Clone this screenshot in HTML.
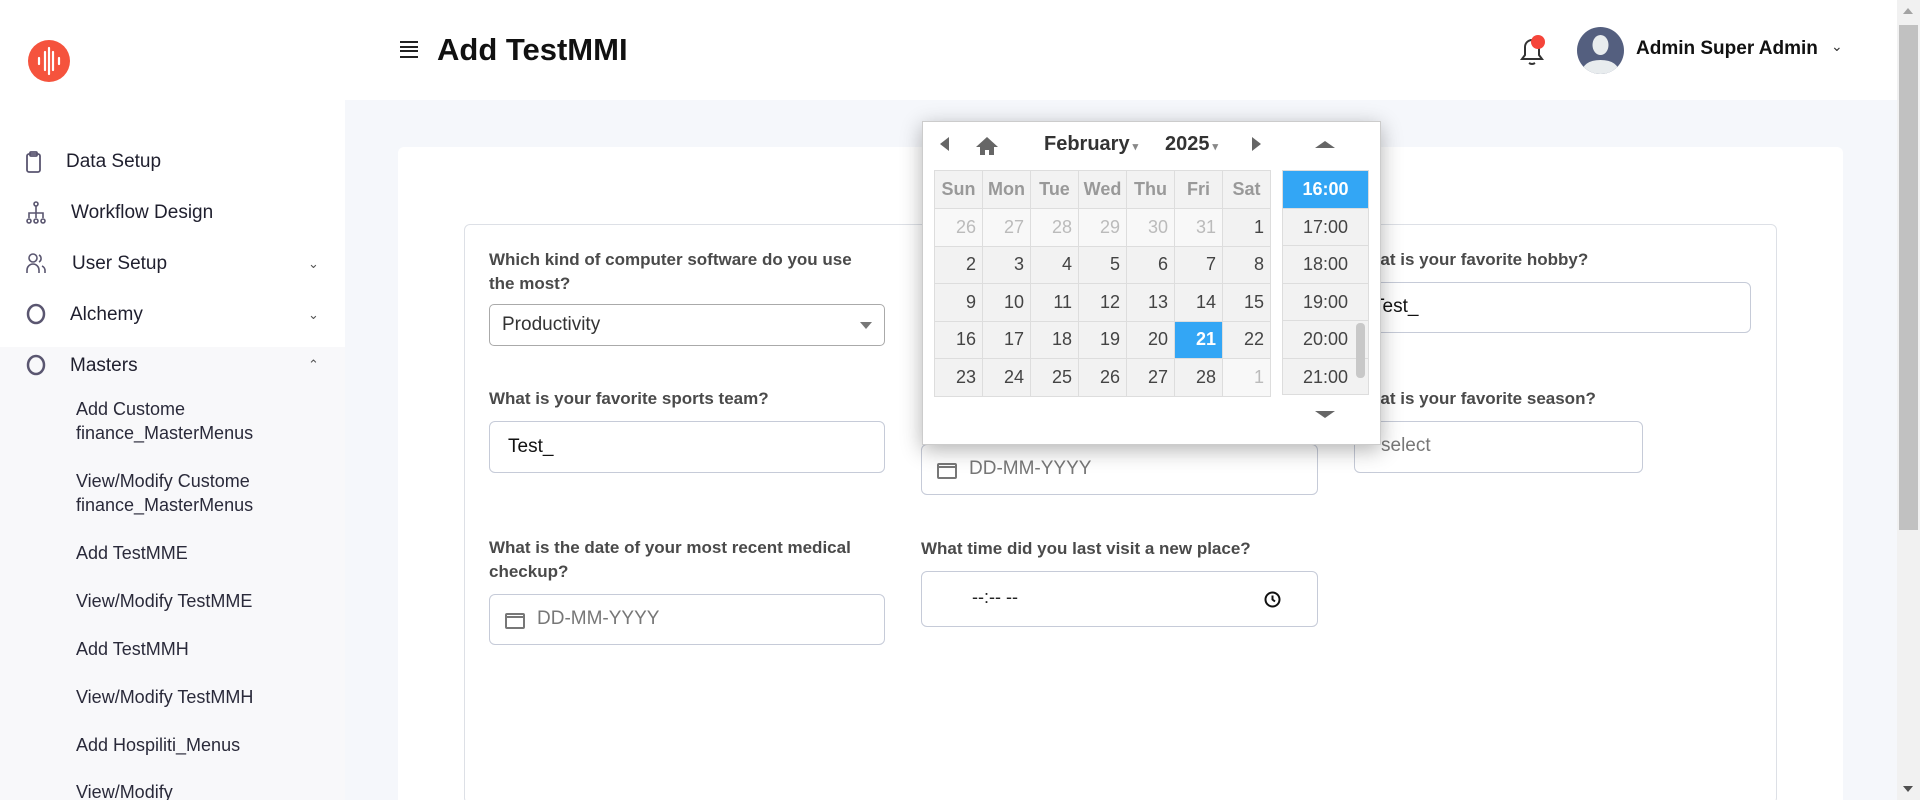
<!DOCTYPE html>
<html style="overflow:hidden;width:1920px;height:800px"><head><meta charset="utf-8"><style>
*{box-sizing:border-box;margin:0;padding:0}
body{width:1920px;height:800px;overflow:hidden;font-family:"Liberation Sans",sans-serif;background:#fff;position:relative;color:#222}
.a{position:absolute}
.side{left:0;top:0;width:345px;height:800px;background:#fff}
.mi{position:absolute;left:66px;font-size:19px;color:#1f1f2e}
.sub{position:absolute;left:76px;font-size:18px;color:#2a2a3a;line-height:24px}
.lbl{position:absolute;font-size:17px;font-weight:bold;color:#4a4a4a;line-height:24px}
.inp{position:absolute;border:1px solid #c6cbd8;border-radius:6px;background:#fff;font-size:19px}
.cal{border-collapse:collapse;position:absolute;left:934px;top:170px}
.cal td{width:48px;height:37.5px;border:1px solid #ddd;background:#f2f2f2;text-align:right;padding-right:6px;font-size:18px;color:#444}
.cal tr.h td{height:38px;text-align:center;padding:0;font-weight:bold;color:#999}
.cal td.o{color:#bbb;background:#f8f8f8}
.cal td.s{background:#33a6f5;color:#fff;font-weight:bold}
.tl div{height:37.5px;border-bottom:1px solid #ddd;background:#f2f2f2;text-align:center;line-height:37px;font-size:18px;color:#444}
</style></head><body>
<div class="a side">
  <svg class="a" style="left:28px;top:40px" width="42" height="42"><circle cx="21" cy="21" r="21" fill="#f5533d"/><g stroke="#fff" stroke-width="2.2" stroke-linecap="round"><line x1="11" y1="18" x2="11" y2="24"/><line x1="17" y1="12" x2="17" y2="30"/><line x1="21" y1="8" x2="21" y2="34"/><line x1="25" y1="12" x2="25" y2="30"/><line x1="31" y1="18" x2="31" y2="24"/></g></svg>
  <svg class="a" style="left:26px;top:151px" width="16" height="22" fill="none" stroke="#5a5670" stroke-width="1.8"><rect x="1" y="3" width="13" height="18" rx="2"/><rect x="4" y="1" width="7" height="4" rx="1"/></svg>
  <div class="mi" style="top:151px">Data Setup</div>
  <svg class="a" style="left:26px;top:201px" width="20" height="24" fill="none" stroke="#5a5670" stroke-width="1.6"><circle cx="10" cy="3" r="2"/><line x1="10" y1="5" x2="10" y2="17"/><path d="M3 17V12h14v5"/><circle cx="3" cy="20" r="2"/><circle cx="10" cy="20" r="2"/><circle cx="17" cy="20" r="2"/></svg>
  <div class="mi" style="top:202px;left:71px">Workflow Design</div>
  <svg class="a" style="left:26px;top:252px" width="20" height="22" fill="none" stroke="#5a5670" stroke-width="1.6"><circle cx="7" cy="6" r="4"/><path d="M1 21v-3a6 6 0 0112 0v3"/><path d="M13 3a4 4 0 010 7M16 14a5 5 0 013 5v2"/></svg>
  <div class="mi" style="top:253px;left:72px">User Setup</div>
  <div class="a" style="left:308px;top:256px;font-size:13px;color:#555">&#8964;</div>
  <svg class="a" style="left:26px;top:303px" width="20" height="22"><ellipse cx="10" cy="11" rx="8" ry="9" fill="none" stroke="#5a5670" stroke-width="2.5"/></svg>
  <div class="mi" style="top:304px;left:70px">Alchemy</div>
  <div class="a" style="left:308px;top:307px;font-size:13px;color:#555">&#8964;</div>
  <div class="a" style="left:0;top:347px;width:345px;height:453px;background:#f8f8fa"></div>
  <svg class="a" style="left:26px;top:354px" width="20" height="22"><ellipse cx="10" cy="11" rx="8" ry="9" fill="none" stroke="#5a5670" stroke-width="2.5"/></svg>
  <div class="mi" style="top:355px;left:70px">Masters</div>
  <div class="a" style="left:308px;top:357px;font-size:13px;color:#555">&#8963;</div>
  <div class="sub" style="top:397px">Add Custome<br>finance_MasterMenus</div>
  <div class="sub" style="top:469px">View/Modify Custome<br>finance_MasterMenus</div>
  <div class="sub" style="top:541px">Add TestMME</div>
  <div class="sub" style="top:589px">View/Modify TestMME</div>
  <div class="sub" style="top:637px">Add TestMMH</div>
  <div class="sub" style="top:685px">View/Modify TestMMH</div>
  <div class="sub" style="top:733px">Add Hospiliti_Menus</div>
  <div class="sub" style="top:780px">View/Modify</div>
</div>
<div class="a" style="left:345px;top:100px;width:1552px;height:700px;background:#f5f7fb"></div>
<div class="a" style="left:400px;top:41px;width:18px;height:17px;border-top:2px solid #222;border-bottom:2px solid #222"><div style="margin-top:3px;border-top:2px solid #222;border-bottom:2px solid #222;height:6px"></div></div>
<div class="a" style="left:437px;top:32px;font-size:31px;font-weight:bold;color:#111">Add TestMMI</div>
<svg class="a" style="left:1518px;top:32px" width="32" height="36" fill="none" stroke="#333" stroke-width="2"><path d="M4 27h20l-3-4v-8a7 7 0 00-14 0v8z"/><path d="M11 31q3 2 6 0"/><circle cx="20" cy="10" r="7" fill="#f5453a" stroke="none"/></svg>
<svg class="a" style="left:1577px;top:27px" width="47" height="47"><circle cx="23.5" cy="23.5" r="23.5" fill="#545f7f"/><clipPath id="c"><circle cx="23.5" cy="23.5" r="23.5"/></clipPath><g clip-path="url(#c)" fill="#e8ecee"><ellipse cx="23.5" cy="18" rx="8" ry="10"/><path d="M4 47q2-14 19.5-14T43 47z"/></g></svg>
<div class="a" style="left:1636px;top:38px;font-size:19px;font-weight:bold;color:#111">Admin Super Admin</div>
<div class="a" style="left:1831px;top:38px;font-size:14px;color:#333">&#8964;</div>
<div class="a" style="left:1897px;top:0;width:23px;height:800px;background:#f1f1f1"><div style="position:absolute;left:2px;top:25px;width:19px;height:505px;background:#c1c1c1"></div>
<div style="position:absolute;left:6px;top:8px;border:5px solid transparent;border-bottom:6px solid #a3a3a3;border-top:0"></div>
<div style="position:absolute;left:6px;bottom:8px;border:5px solid transparent;border-top:6px solid #505050;border-bottom:0"></div></div>

<div class="a" style="left:398px;top:147px;width:1445px;height:653px;background:#fff;border-radius:6px 6px 0 0"></div>
<div class="a" style="left:464px;top:224px;width:1313px;height:580px;border:1px solid #dde0e6;border-radius:6px"></div>

<div class="lbl" style="left:489px;top:248px;width:420px">Which kind of computer software do you use<br>the most?</div>
<div class="inp" style="left:489px;top:304px;width:396px;height:42px;border-color:#aaa;border-radius:5px"><span style="position:absolute;left:12px;top:9px;color:#333">Productivity</span><span style="position:absolute;right:12px;top:17px;border:6px solid transparent;border-top:7px solid #777;border-bottom:0"></span></div>
<div class="lbl" style="left:489px;top:387px">What is your favorite sports team?</div>
<div class="inp" style="left:489px;top:421px;width:396px;height:52px"><span style="position:absolute;left:18px;top:14px;color:#111">Test_</span></div>
<div class="lbl" style="left:489px;top:536px;width:420px">What is the date of your most recent medical checkup?</div>
<div class="inp" style="left:489px;top:594px;width:396px;height:51px"><svg style="position:absolute;left:15px;top:17px" width="20" height="17" fill="none" stroke="#777" stroke-width="2"><rect x="1" y="2" width="18" height="14" rx="1"/><line x1="1" y1="5" x2="19" y2="5"/></svg><span style="position:absolute;left:47px;top:13px;color:#777">DD-MM-YYYY</span></div>

<div class="inp" style="left:921px;top:444px;width:397px;height:51px"><svg style="position:absolute;left:15px;top:17px" width="20" height="17" fill="none" stroke="#777" stroke-width="2"><rect x="1" y="2" width="18" height="14" rx="1"/><line x1="1" y1="5" x2="19" y2="5"/></svg><span style="position:absolute;left:47px;top:13px;color:#777">DD-MM-YYYY</span></div>
<div class="lbl" style="left:921px;top:537px">What time did you last visit a new place?</div>
<div class="inp" style="left:921px;top:571px;width:397px;height:56px"><span style="position:absolute;left:50px;top:15px;color:#222;font-size:18px">--:-- --</span><svg style="position:absolute;left:342px;top:19px" width="17" height="17" fill="none" stroke="#111" stroke-width="2"><circle cx="8.5" cy="8.5" r="7"/><path d="M8.5 4.5v4l2.5 2"/></svg></div>

<div class="lbl" style="left:1354px;top:248px">What is your favorite hobby?</div>
<div class="inp" style="left:1354px;top:282px;width:397px;height:51px"><span style="position:absolute;left:18px;top:13px;color:#111">Test_</span></div>
<div class="lbl" style="left:1354px;top:387px">What is your favorite season?</div>
<div class="inp" style="left:1354px;top:421px;width:289px;height:52px"><span style="position:absolute;left:26px;top:13px;color:#777">select</span></div>

<div class="a" style="left:922px;top:121px;width:459px;height:324px;background:#fff;border:1px solid #ccc;box-shadow:0 5px 20px rgba(0,0,0,.3)"></div>
<div class="a" style="left:940px;top:137px;border:7px solid transparent;border-right:9px solid #666;border-left:0;height:0"></div>
<svg class="a" style="left:975px;top:136px" width="24" height="20"><path d="M12 1L1 11h4v8h5v-5h4v5h5v-8h4z" fill="#666"/></svg>
<div class="a" style="left:1044px;top:133px;font-size:20px;font-weight:bold;color:#333">February<span style="font-size:11px;color:#888"> &#9662;</span></div>
<div class="a" style="left:1165px;top:133px;font-size:20px;font-weight:bold;color:#333">2025<span style="font-size:11px;color:#888"> &#9662;</span></div>
<div class="a" style="left:1252px;top:137px;border:7px solid transparent;border-left:9px solid #666;border-right:0;height:0"></div>
<div class="a" style="left:1315px;top:141px;border:10px solid transparent;border-bottom:7px solid #666;border-top:0"></div>
<div class="a" style="left:1315px;top:411px;border:10px solid transparent;border-top:7px solid #666;border-bottom:0"></div>
<table class="cal">
<tr class="h"><td>Sun</td><td>Mon</td><td>Tue</td><td>Wed</td><td>Thu</td><td>Fri</td><td>Sat</td></tr>
<tr><td class="o">26</td><td class="o">27</td><td class="o">28</td><td class="o">29</td><td class="o">30</td><td class="o">31</td><td>1</td></tr>
<tr><td>2</td><td>3</td><td>4</td><td>5</td><td>6</td><td>7</td><td>8</td></tr>
<tr><td>9</td><td>10</td><td>11</td><td>12</td><td>13</td><td>14</td><td>15</td></tr>
<tr><td>16</td><td>17</td><td>18</td><td>19</td><td>20</td><td class="s">21</td><td>22</td></tr>
<tr><td>23</td><td>24</td><td>25</td><td>26</td><td>27</td><td>28</td><td class="o">1</td></tr>
</table>
<div class="a tl" style="left:1282px;top:170px;width:87px;height:225px;border:1px solid #ddd;overflow:hidden">
<div style="background:#33a6f5;color:#fff;font-weight:bold">16:00</div><div>17:00</div><div>18:00</div><div>19:00</div><div>20:00</div><div>21:00</div>
<span style="position:absolute;right:3px;top:152px;width:9px;height:55px;background:#c8c8c8;border-radius:4px"></span></div>
</body></html>
